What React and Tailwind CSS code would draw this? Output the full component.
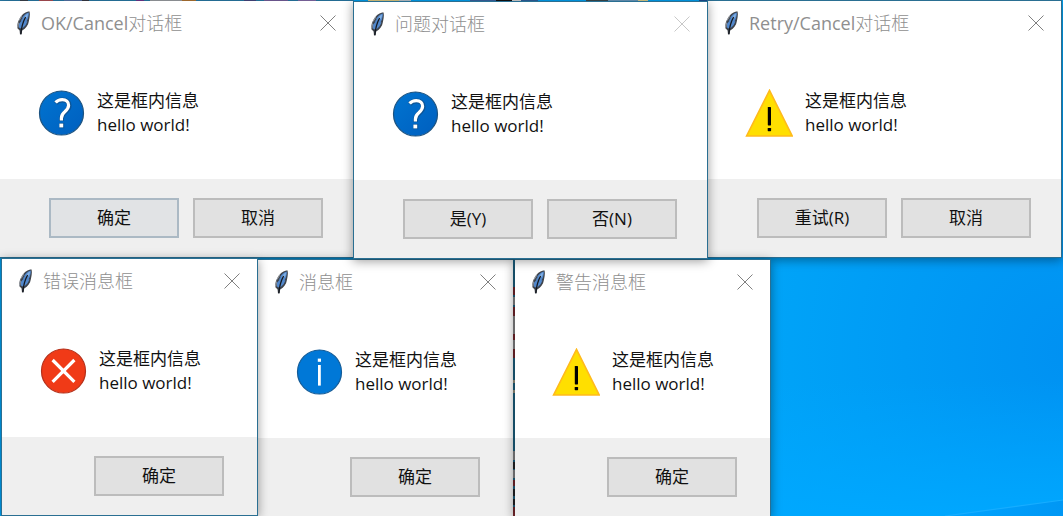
import React from "react";

function Feather() {
  return (
    <svg viewBox="0 0 16 24" className="h-6 w-4 shrink-0" aria-hidden="true">
      <path
        d="M13.6 0.4C9.8 0.4 6.4 2.8 4.2 6.6C2.2 10 0.9 12.7 1.4 17.2L3.6 19.4L4 23.6L5.6 23.6L6.2 19.4C10 17.6 12.2 14.2 12.8 10.6C13.2 7.6 14.4 4.4 13.6 0.4Z"
        fill="#3f444c"
      />
      <path
        d="M12.8 1.4C10 2 7.6 4.2 5.8 7.2L7 6.8L4.6 9.8L5.8 9.4L3 12.8L2.9 16.6L5.4 17.8C8.8 15.8 10.6 13.4 11.4 10L10.4 10.6L12 7.4C12.2 5.4 13.2 4 12.8 1.4Z"
        fill="#5288cc"
      />
      <path d="M11.8 2.4C9.8 3.6 8.4 5.4 7.6 7.8L11 6.8C11.6 5.2 12.1 3.8 11.8 2.4Z" fill="#82b0e4" />
      <path d="M9.6 6C7.4 10 5.6 14.4 4.8 23" fill="none" stroke="#14181f" strokeWidth="1.3" />
      <path d="M2.4 11.5L1.8 16.5M5.6 5.2L3 9.6" stroke="#a6abb2" strokeWidth="0.9" />
    </svg>
  );
}

function QuestionIcon() {
  return (
    <svg viewBox="0 0 48 48" className="size-12 shrink-0" aria-hidden="true">
      <defs>
        <linearGradient id="q" x1="0" y1="0" x2="1" y2="1">
          <stop offset="0" stopColor="#0074d0" />
          <stop offset="1" stopColor="#005fbf" />
        </linearGradient>
      </defs>
      <circle cx="24.5" cy="24" r="22" fill="url(#q)" stroke="#1d5380" strokeWidth="1.2" />
      <path
        d="M18.6 14.2C20.4 12 22.8 11 25.6 11C29.6 11 32.2 13 32.2 16.6C32.2 19.6 30.6 21.2 28.2 23.2C25.8 25.2 24.6 26.8 24.6 29.6V32"
        fill="none"
        stroke="#17456f"
        strokeWidth="4.8"
        opacity="0.55"
      />
      <rect x="22" y="34" width="5.2" height="5.2" fill="#17456f" opacity="0.55" />
      <path
        d="M18.6 13.6C20.4 11.4 22.8 10.6 25.2 10.6C29.2 10.6 31.6 12.8 31.6 16.2C31.6 19.2 30 20.8 27.8 22.8C25.4 24.8 24.4 26.4 24.4 29.2V31.4"
        fill="none"
        stroke="#fff"
        strokeWidth="3.2"
      />
      <rect x="22.4" y="34.6" width="3.8" height="3.8" fill="#fff" />
    </svg>
  );
}

function WarningIcon() {
  return (
    <svg viewBox="0 0 48 48" className="size-12 shrink-0" aria-hidden="true">
      <path d="M24.5 1.4L47.2 47H1.6Z" fill="#ffdf00" stroke="#ffba1c" strokeWidth="1.6" />
      <rect x="22.8" y="18" width="3.2" height="18.4" rx="0.6" fill="#000" />
      <rect x="22.7" y="39" width="3.4" height="3.2" rx="0.6" fill="#000" />
    </svg>
  );
}

function ErrorIcon() {
  return (
    <svg viewBox="0 0 48 48" className="size-12 shrink-0" aria-hidden="true">
      <circle cx="24.5" cy="24" r="22" fill="#f03a17" stroke="#b5301a" strokeWidth="1.2" />
      <path d="M13.6 13L35.4 34.8M35.4 13L13.6 34.8" stroke="#fff" strokeWidth="3.2" />
    </svg>
  );
}

function InfoIcon() {
  return (
    <svg viewBox="0 0 48 48" className="size-12 shrink-0" aria-hidden="true">
      <circle cx="24.5" cy="24" r="22" fill="#0078d7" stroke="#135b97" strokeWidth="1.2" />
      <rect x="22.8" y="10.6" width="3.2" height="3.2" fill="#fff" />
      <rect x="23" y="17" width="2.8" height="20.6" fill="#fff" />
    </svg>
  );
}

const icons = {
  question: QuestionIcon,
  warning: WarningIcon,
  error: ErrorIcon,
  info: InfoIcon,
};

function Dialog({ title, icon, buttons, place, wide, focusFirst, closeDisabled }) {
  const Icon = icons[icon];
  return (
    <section
      aria-label={title}
      className={`absolute flex flex-col border border-[#2a6f92] bg-white bg-clip-padding shadow-[0_2px_10px_rgba(0,0,0,0.4)] ${
        wide ? "w-[355px]" : "w-[257px]"
      } ${place}`}
    >
      <header className="flex h-11 items-center pr-[17px] pl-4">
        <Feather />
        <h2 className="ml-[9px] flex-1 font-['Open_Sans','Noto_Sans_CJK_SC_Light','Noto_Sans_CJK_SC',sans-serif] text-lg leading-6 whitespace-nowrap text-[#8f8f8f]">
          {title}
        </h2>
        <button
          type="button"
          aria-label="关闭"
          disabled={closeDisabled}
          className="size-4 text-[#808080] disabled:text-[#c8c8c8]"
        >
          <svg viewBox="0 0 16 16" className="size-4" aria-hidden="true">
            <path d="M0.5 0.5L15.5 15.5M15.5 0.5L0.5 15.5" stroke="currentColor" strokeWidth="1" />
          </svg>
        </button>
      </header>
      <div className="flex h-[134px] items-center gap-3 pt-0.5 pl-[37px]">
        <Icon />
        <p className="text-[17px] leading-6 text-[#111]">
          这是框内信息
          <br />
          hello world!
        </p>
      </div>
      <footer
        className={`flex h-[78px] items-center justify-end gap-3.5 bg-[#efefef] ${wide ? "pr-[30px]" : "pr-[33px]"}`}
      >
        {buttons.map((label, i) => (
          <button
            key={label}
            type="button"
            className={`h-10 w-[130px] border-2 text-[17px] leading-6 text-[#111] ${
              focusFirst && i === 0 ? "border-[#abb9c4] bg-[#e1e3e5]" : "border-[#bcbcbc] bg-[#e1e1e1]"
            }`}
          >
            {label}
          </button>
        ))}
      </footer>
    </section>
  );
}

const topScraps = [
  [20, 8, "#3d4450"], [39, 14, "#b5525a"], [64, 18, "#5a7ab0"], [82, 7, "#3b3c48"],
  [136, 8, "#743a96"], [150, 32, "#a3a6ab"], [182, 14, "#b97b36"], [244, 12, "#4a4a86"],
  [264, 24, "#7c64a4"], [298, 18, "#8a70b0"], [368, 31, "#e0cd84"], [399, 12, "#bfc8cf"],
  [470, 26, "#3a66a4"], [496, 16, "#111"], [512, 9, "#d8d8d8"], [521, 17, "#2d62a0"],
  [586, 22, "#3c4a4e"], [608, 30, "#6d9cc0"], [638, 10, "#e0d48c"], [699, 56, "#1c4f96"],
];

const sideScraps = [
  [287, 8, "#8f2f36"], [297, 8, "#a4a4a6"], [307, 9, "#8f2f36"], [316, 18, "#a4a4a6"],
  [334, 6, "#8f2f36"], [340, 9, "#a4a4a6"], [349, 9, "#8f2f36"], [380, 3, "#b9b39c"],
  [390, 3, "#b9b39c"], [451, 9, "#a4a4a6"], [462, 7, "#2b2b2e"], [470, 8, "#a4a4a6"],
  [480, 6, "#8f2f36"], [489, 7, "#2b2b2e"], [499, 6, "#2b2b2e"], [507, 9, "#8f2f36"],
];

function Wallpaper() {
  return (
    <svg
      viewBox="0 0 1063 516"
      preserveAspectRatio="none"
      className="absolute inset-0 size-full"
      aria-hidden="true"
    >
      <defs>
        <radialGradient id="sky" gradientUnits="userSpaceOnUse" cx="1070" cy="350" r="330">
          <stop offset="0" stopColor="#0091f2" />
          <stop offset="0.5" stopColor="#009bf5" />
          <stop offset="1" stopColor="#00a5f8" />
        </radialGradient>
        <linearGradient id="beam" x1="0" y1="0" x2="1" y2="0">
          <stop offset="0" stopColor="#00a4ff" />
          <stop offset="1" stopColor="#0097f4" />
        </linearGradient>
        <linearGradient id="glow" x1="0" y1="0" x2="0" y2="1">
          <stop offset="0" stopColor="#00a6ff" stopOpacity="0" />
          <stop offset="1" stopColor="#00a8ff" stopOpacity="0.9" />
        </linearGradient>
      </defs>
      <rect width="1063" height="516" fill="url(#sky)" />
      <rect y="380" width="1063" height="136" fill="url(#glow)" />
      <path d="M945 516L1063 500V516Z" fill="url(#beam)" />
      <path d="M945 516L1063 500" stroke="#16adff" strokeWidth="1.2" />
      <rect width="353" height="2" fill="#2a7fae" />
      {topScraps.map(([x, w, fill]) => (
        <rect key={x} x={x} width={w} height="2" fill={fill} />
      ))}
      <rect x="512" y="258" width="4" height="258" fill="#23789f" />
      {sideScraps.map(([y, h, fill]) => (
        <rect key={y} x="512" y={y} width="4" height={h} fill={fill} />
      ))}
    </svg>
  );
}

export default function App() {
  return (
    <main className="relative h-screen w-full overflow-hidden bg-[#009cf6] font-['Open_Sans','Noto_Sans_CJK_SC',sans-serif]">
      <Wallpaper />
      <Dialog
        title="OK/Cancel对话框"
        icon="question"
        buttons={["确定", "取消"]}
        place="top-0 -left-px z-10 border-t-transparent"
        wide
        focusFirst
      />
      <Dialog
        title="问题对话框"
        icon="question"
        buttons={["是(Y)", "否(N)"]}
        place="top-px left-[353px] z-40"
        wide
        closeDisabled
      />
      <Dialog
        title="Retry/Cancel对话框"
        icon="warning"
        buttons={["重试(R)", "取消"]}
        place="top-0 left-[707px] z-10"
        wide
      />
      <Dialog
        title="错误消息框"
        icon="error"
        buttons={["确定"]}
        place="top-[258px] left-px z-30"
      />
      <Dialog
        title="消息框"
        icon="info"
        buttons={["确定"]}
        place="top-[259px] left-[257px] z-10 border-r-transparent"
      />
      <Dialog
        title="警告消息框"
        icon="warning"
        buttons={["确定"]}
        place="top-[259px] left-[514px] z-20 border-l-transparent"
      />
    </main>
  );
}
